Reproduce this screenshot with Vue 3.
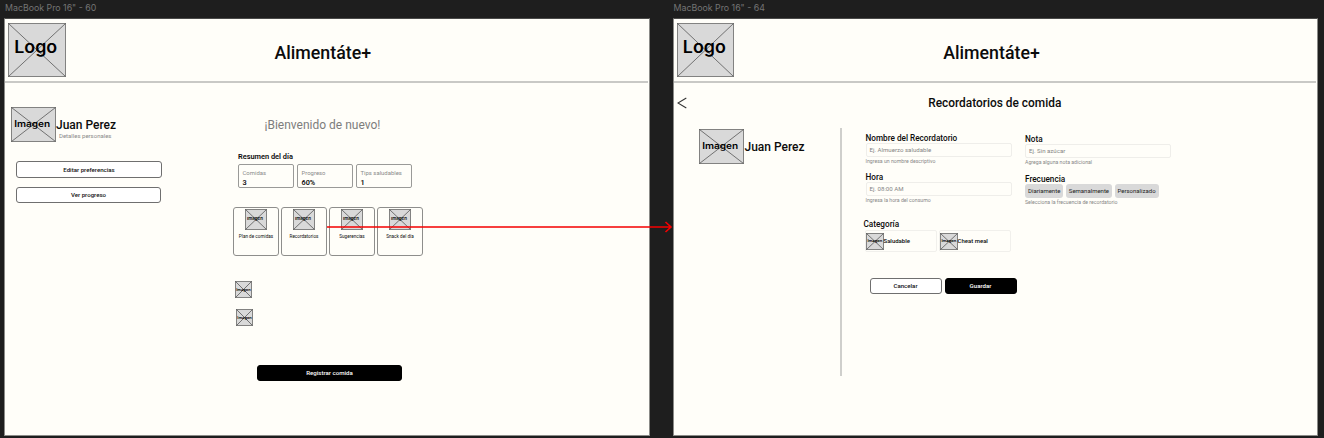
<script setup>
import { h } from 'vue'

// Wireframe image placeholder: grey box, crossed diagonals, centred caption
const Placeholder = ({ w, ht, label, size, tw, tx, ty, arc }) =>
  h('svg', { width: w, height: ht, viewBox: `0 0 ${w} ${ht}`, style: { display: 'block', flex: 'none', overflow: 'visible' } }, [
    h('rect', { x: 0.5, y: 0.5, width: w - 1, height: ht - 1, fill: '#d9d9d9', stroke: '#777', 'stroke-width': 0.9 }),
    h('path', { d: `M.5 .5L${w - 0.5} ${ht - 0.5}M${w - 0.5} .5L.5 ${ht - 0.5}`, stroke: '#444', 'stroke-width': 0.7, fill: 'none' }),
    arc ? h('path', { d: `M${w / 2 - 4} ${ht}q4 -1.6 9 0z`, fill: '#555' }) : null,
    h('text', { x: tx, y: ty, textLength: tw, lengthAdjust: 'spacingAndGlyphs', 'font-size': size, 'font-weight': 600, 'font-family': 'Inter, sans-serif', fill: '#000' }, label),
  ])
Placeholder.props = ['w', 'ht', 'label', 'size', 'tw', 'tx', 'ty', 'arc']

const stats = [
  { label: 'Comidas', value: '3' },
  { label: 'Progreso', value: '60%' },
  { label: 'Tips saludables', value: '1' },
]
const actions = ['Plan de comidas', 'Recordatorios', 'Sugerencias', 'Snack del día']
const frequencies = ['Diariamente', 'Semanalmente', 'Personalizado']
const categories = ['Saludable', 'Cheat meal']
</script>

<template>
  <div class="canvas">
    <section class="board">
      <div class="board-name">MacBook Pro 16" - 60</div>
      <div class="frame">
        <header class="top">
          <Placeholder :w="58" :ht="54" label="Logo" :size="17" :tw="43" :tx="6.2" :ty="29.8" />
          <h1>Alimentáte+</h1>
        </header>
        <div class="home">
          <aside class="side">
            <div class="profile">
              <Placeholder :w="45" :ht="35" label="Imagen" :size="8.8" :tw="36" :tx="3.2" :ty="20.2" arc />
              <div class="who">
                <div class="name">Juan Perez</div>
                <div class="details">Detalles personales</div>
              </div>
            </div>
            <button class="btn wide">Editar preferencias</button>
            <button class="btn wide second">Ver progreso</button>
          </aside>
          <main class="main">
            <div class="welcome">¡Bienvenido de nuevo!</div>
            <div class="summary">Resumen del día</div>
            <div class="stats">
              <div v-for="s in stats" :key="s.label" class="stat">
                <div class="stat-label">{{ s.label }}</div>
                <div class="stat-value">{{ s.value }}</div>
              </div>
            </div>
            <div class="actions">
              <div v-for="a in actions" :key="a" class="action">
                <Placeholder :w="22" :ht="21" label="Imagen" :size="3.7" :tw="16" :tx="2" :ty="11.3" />
                <span>{{ a }}</span>
              </div>
            </div>
            <div class="thumbs">
              <Placeholder :w="17" :ht="17" label="Imagen" :size="3.5" :tw="14.5" :tx="1.2" :ty="9.6" />
              <Placeholder class="thumb-b" :w="17" :ht="17" label="Imagen" :size="3.5" :tw="14.5" :tx="1.3" :ty="9.6" />
            </div>
            <button class="btn dark register">Registrar comida</button>
          </main>
        </div>
      </div>
    </section>

    <section class="board">
      <div class="board-name">MacBook Pro 16" - 64</div>
      <div class="frame">
        <header class="top second-top">
          <Placeholder :w="57" :ht="54" label="Logo" :size="17" :tw="43" :tx="5.8" :ty="30" />
          <h1>Alimentáte+</h1>
        </header>
        <div class="subhead">
          <svg class="back" width="10" height="12" viewBox="0 0 10 12"><path d="M9.3 1L.9 6l8.4 5" fill="none" stroke="#333" stroke-width="1.1" /></svg>
          <h2>Recordatorios de comida</h2>
        </div>
        <div class="reminder">
          <aside class="side-b">
            <Placeholder :w="45" :ht="35" label="Imagen" :size="8.8" :tw="36" :tx="3.2" :ty="20.2" arc />
            <div class="name">Juan Perez</div>
          </aside>
          <div class="form">
            <div class="cols">
              <div class="col">
                <label class="lab">Nombre del Recordatorio</label>
                <div class="input">Ej. Almuerzo saludable</div>
                <div class="hint">Ingresa un nombre descriptivo</div>
                <label class="lab gap">Hora</label>
                <div class="input">Ej. 08:00 AM</div>
                <div class="hint">Ingresa la hora del consumo</div>
              </div>
              <div class="col right">
                <label class="lab">Nota</label>
                <div class="input">Ej. Sin azúcar</div>
                <div class="hint">Agrega alguna nota adicional</div>
                <label class="lab gap">Frecuencia</label>
                <div class="chips">
                  <span v-for="f in frequencies" :key="f" class="chip">{{ f }}</span>
                </div>
                <div class="hint">Selecciona la frecuencia de recordatorio</div>
              </div>
            </div>
            <div class="lab cat-title">Categoría</div>
            <div class="cats">
              <div v-for="c in categories" :key="c" class="cat">
                <Placeholder :w="18" :ht="17" label="Imagen" :size="3.5" :tw="15" :tx="1.4" :ty="9.4" />
                <span>{{ c }}</span>
              </div>
            </div>
            <div class="buttons">
              <button class="btn">Cancelar</button>
              <button class="btn dark">Guardar</button>
            </div>
          </div>
        </div>
      </div>
    </section>

    <svg class="flow" width="346" height="12" viewBox="0 0 346 12">
      <path d="M0 6H344M338.5 1l5.5 5-5.5 5" fill="none" stroke="#f50000" stroke-width="1.6" />
    </svg>
  </div>
</template>

<style>
body { background: #1e1e1e; overflow: hidden; }
</style>

<style scoped>
.canvas, .canvas * { box-sizing: border-box; }
.canvas {
  position: relative;
  display: flex;
  gap: 23px;
  width: 1324px;
  height: 438px;
  padding-left: 4px;
  background: #1e1e1e;
  color: #0c0c0c;
  font-family: Roboto, "Liberation Sans", sans-serif;
  white-space: nowrap;
  overflow: hidden;
}
.board { width: 645.5px; flex: none; }
.board-name {
  height: 18px;
  padding-left: 1px;
  font: 400 8.8px/15px Inter, sans-serif;
  color: #747474;
}
.frame {
  height: 418px;
  border: 1px solid #8b8b88;
  border-top-color: #4a4a49;
  background: #fffef9;
}
.top {
  display: grid;
  grid-template-columns: 58px 1fr;
  height: 64px;
  margin-right: 1px;
  padding: 4px 0 0 3px;
  border-bottom: 2px solid #c9c9c6;
}
.second-top { padding-left: 3.5px; }
h1 {
  margin: 0 61px 0 0;
  padding-right: 7px;
  text-align: center;
  font-weight: 500;
  font-size: 17.8px;
  line-height: 59px;
}
.home { display: grid; grid-template-columns: 228px 1fr; }
.side { padding: 24px 0 0 6px; }
.profile { display: flex; height: 35px; }
.who { padding-top: 10px; }
.name { font-weight: 500; font-size: 12px; line-height: 16px; }
.details { margin: -1px 0 0 3px; font-size: 6px; line-height: 8px; color: #8a8a8a; }
.btn {
  display: block;
  width: 72px;
  height: 16px;
  padding: 0;
  border: 0.8px solid #6f6f6f;
  border-radius: 3px;
  background: #fff;
  color: #111;
  font: 500 6.1px/14px Roboto, sans-serif;
  text-align: center;
}
.wide { width: 146px; height: 17px; margin: 19px 0 0 5px; }
.second { width: 145px; height: 16px; margin-top: 9px; }
.dark { background: #000; border-color: #000; color: #fff; }
.welcome { margin: 33px 0 0 31.5px; font-size: 12px; line-height: 18px; color: #7d7d7d; }
.summary { margin: 18px 0 0 5px; font-size: 7.4px; line-height: 10px; font-weight: 600; }
.stats { display: flex; gap: 3px; margin: 2px 0 0 5px; }
.stat { width: 56px; height: 24px; padding: 3px 0 0 3.5px; border: 1px solid #9a9a98; border-radius: 2px; }
.stat-label { font-size: 5.95px; line-height: 9px; color: #8a8a8a; }
.stat-value { font-size: 7.3px; line-height: 12px; font-weight: 600; }
.actions { display: flex; gap: 2px; margin-top: 19px; }
.action {
  display: flex;
  flex-direction: column;
  align-items: center;
  width: 46px;
  height: 49px;
  padding-top: 1px;
  border: 1px solid #8e8e8c;
  border-radius: 3px;
}
.action span { margin-top: 3px; font-size: 4.65px; line-height: 8px; }
.thumbs { display: grid; gap: 11px; margin: 25px 0 0 2px; }
.thumb-b { margin-left: 1px; }
.register { width: 145px; height: 16px; margin: 39px 0 0 24px; }

.subhead { display: grid; grid-template-columns: 14px 1fr; padding-left: 3px; height: 45px; }
.back { margin-top: 14px; }
h2 {
  margin: 10px 0 0;
  padding-right: 18px;
  text-align: center;
  font-size: 11.9px;
  font-weight: 500;
  line-height: 20px;
}
.reminder { display: flex; }
.side-b {
  display: flex;
  gap: 1px;
  width: 168.5px;
  height: 248px;
  padding: 1px 0 0 25px;
  border-right: 2px solid #cfcfcc;
}
.side-b .name { margin-top: 10px; }
.form { padding: 5px 0 0 23.5px; }
.cols { display: flex; gap: 13.5px; height: 86px; }
.col { width: 146px; }
.right { padding-top: 1px; }
.lab { display: block; font-size: 8.2px; line-height: 10px; font-weight: 500; }
.gap { margin-top: 6px; }
.right .gap { margin-top: 7px; }
.input {
  height: 14px;
  padding-left: 3px;
  border: 1px solid #efeeea;
  border-radius: 2px;
  font-size: 6.1px;
  line-height: 12px;
  color: #858585;
}
.hint { font-size: 5.2px; line-height: 9px; color: #888; }
.chips { display: flex; gap: 2.5px; }
.chip {
  height: 14px;
  padding: 0 3px;
  border-radius: 3px;
  background: #d9d9d9;
  font-size: 6px;
  line-height: 14px;
  color: #222;
}
.cat-title { margin: 0 0 0 -2px; }
.cats { display: flex; gap: 2px; margin: 1px 0 0 -1px; }
.cat {
  display: flex;
  align-items: center;
  width: 72px;
  height: 22px;
  border: 1px solid #f1f0ec;
  border-radius: 2px;
  font-size: 6px;
  line-height: 8px;
  font-weight: 500;
}
.cat span { margin-bottom: 1px; }
.buttons { display: flex; gap: 3px; margin: 26px 0 0 4px; }

.flow { position: absolute; left: 327px; top: 221px; }
</style>
